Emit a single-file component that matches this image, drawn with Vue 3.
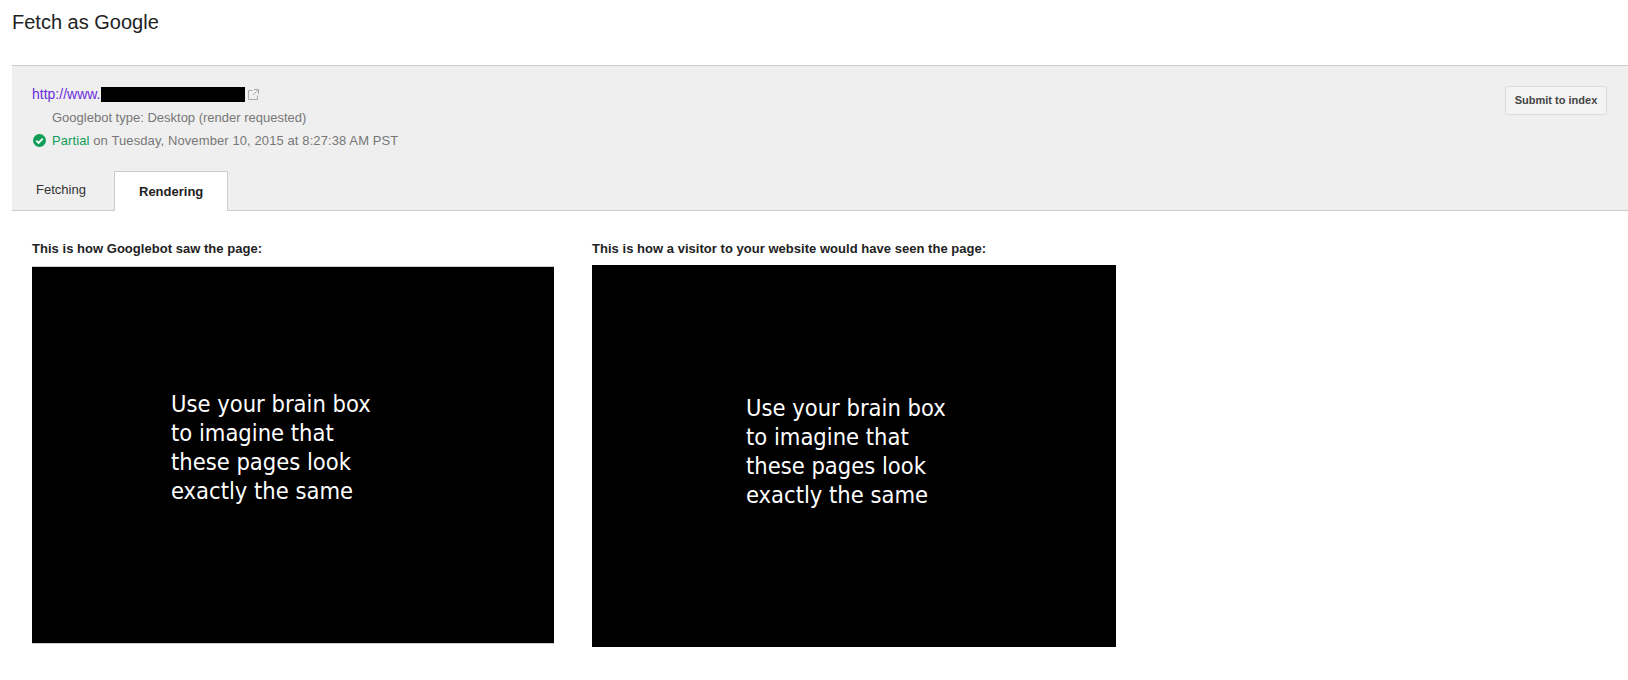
<script setup>
const meta = 'Googlebot type: Desktop (render requested)'
const lines = ['Use your brain box', 'to imagine that', 'these pages look', 'exactly the same']
</script>

<template>
  <div class="page">
    <h1 class="title">Fetch as Google</h1>
    <section class="panel">
      <div class="head">
        <div class="info">
          <div class="url-row">
            <a class="url">http://www.</a>
            <span class="redact"></span>
            <svg class="ext" width="11" height="11" viewBox="0 0 11 11" fill="none" stroke="#a9a9a9" stroke-width="1">
              <path d="M4.5 1.5H.5v9h9V6.5" />
              <path d="M6 .5h4.5V5M10.5 .5L5 6" />
            </svg>
          </div>
          <div class="meta">{{ meta }}</div>
          <div class="status">
            <svg class="check" width="13" height="13" viewBox="0 0 13 13">
              <circle cx="6.5" cy="6.5" r="6.5" fill="#0f9d58" />
              <path d="M3.3 6.6l2.3 2.3 4.1-4.3" fill="none" stroke="#fff" stroke-width="1.9" />
            </svg>
            <span class="partial">Partial</span>&nbsp;on Tuesday, November 10, 2015 at 8:27:38 AM PST
          </div>
        </div>
        <button class="submit">Submit to index</button>
      </div>
      <div class="tabs">
        <div class="tab">Fetching</div>
        <div class="tab active">Rendering</div>
      </div>
    </section>
    <div class="columns">
      <div class="col left">
        <div class="label">This is how Googlebot saw the page:</div>
        <div class="shot">
          <div v-for="l in lines" :key="l">{{ l }}</div>
        </div>
      </div>
      <div class="col right">
        <div class="label">This is how a visitor to your website would have seen the page:</div>
        <div class="shot">
          <div v-for="l in lines" :key="l">{{ l }}</div>
        </div>
      </div>
    </div>
  </div>
</template>

<style>
html, body { background: #fff; }
</style>

<style scoped>
.page {
  width: 1628px;
  height: 680px;
  overflow: hidden;
  font-family: "Liberation Sans", Arial, sans-serif;
  background: #fff;
}
.title {
  margin: 0;
  padding: 10px 0 0 12px;
  height: 65px;
  box-sizing: border-box;
  font-size: 20px;
  line-height: 24px;
  font-weight: 400;
  color: #222;
}
.panel {
  margin-left: 12px;
  height: 146px;
  box-sizing: border-box;
  background: #efefef;
  border-top: 1px solid #ccc;
  border-bottom: 1px solid #ccc;
  display: flex;
  flex-direction: column;
  justify-content: space-between;
}
.head {
  display: flex;
  justify-content: space-between;
  align-items: flex-start;
  padding: 20px 21px 0 20px;
}
.info {
  font-size: 13px;
  color: #777;
}
.url-row {
  display: flex;
  align-items: center;
  height: 17px;
  line-height: 17px;
  font-size: 14px;
}
.url { color: #6a2ddb; }
.redact {
  width: 144px;
  height: 15px;
  margin-left: 1px;
  background: #000;
}
.ext { margin-left: 3px; }
.meta {
  padding-left: 20px;
  line-height: 17px;
  margin-top: 6px;
}
.status {
  display: flex;
  align-items: center;
  line-height: 17px;
  margin-top: 6px;
  white-space: pre;
  letter-spacing: 0.1px;
}
.check { margin: 0 6px 0 1px; }
.partial { color: #0f9d58; }
.submit {
  width: 102px;
  height: 29px;
  padding: 0 0 2px;
  border: 1px solid #dcdcdc;
  border-radius: 2px;
  background: #f3f3f3;
  color: #444;
  font: bold 11px "Liberation Sans", Arial, sans-serif;
}
.tabs {
  display: flex;
  margin-bottom: -1px;
}
.tab {
  width: 102px;
  height: 40px;
  box-sizing: border-box;
  padding-left: 24px;
  line-height: 38px;
  font-size: 13px;
  color: #333;
}
.tab.active {
  width: 114px;
  padding-left: 24px;
  line-height: 39px;
  background: #fff;
  border: 1px solid #ccc;
  border-bottom: 0;
  font-weight: 700;
  color: #222;
}
.columns {
  display: flex;
  padding-left: 32px;
}
.col.left { width: 560px; }
.col.right { width: 525px; }
.label {
  font-size: 13px;
  font-weight: 700;
  color: #222;
  line-height: 16px;
  padding-top: 30px;
  letter-spacing: 0.03px;
}
.shot {
  background: #000;
  color: #fff;
  font-family: "DejaVu Sans", sans-serif;
  font-stretch: condensed;
  font-size: 23.5px;
  line-height: 29px;
}
.left .shot {
  width: 522px;
  height: 378px;
  margin-top: 9px;
  border-top: 1px solid #ccc;
  border-bottom: 1px solid #ccc;
  padding: 123px 0 0 139px;
  box-sizing: border-box;
}
.right .shot {
  width: 524px;
  height: 382px;
  margin-top: 8px;
  padding: 129px 0 0 154px;
  box-sizing: border-box;
}
</style>
